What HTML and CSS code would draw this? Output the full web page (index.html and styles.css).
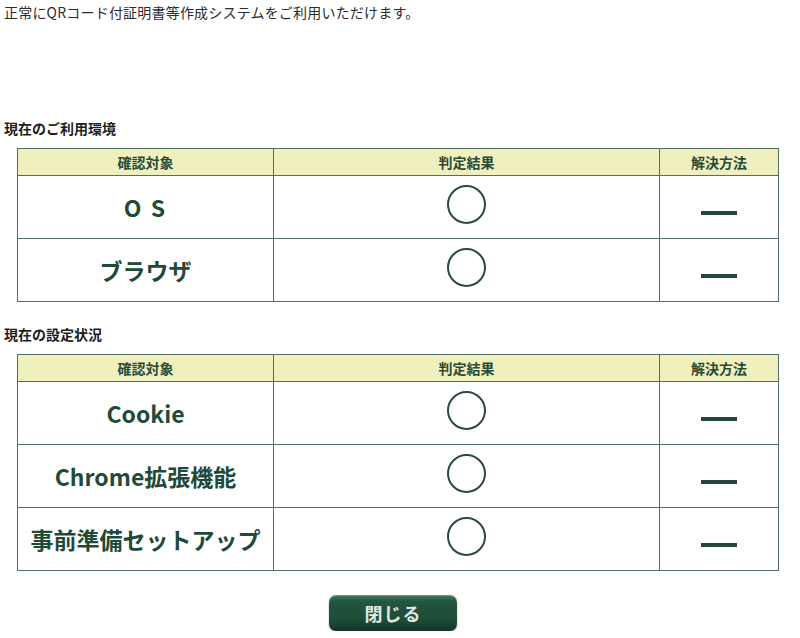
FILE: index.html
```
<!DOCTYPE html>
<html lang="ja">

<head>
    <meta charset="UTF-8">
    <meta name="viewport" content="width=device-width, initial-scale=1.0">
    <title>利用環境チェック</title>
    <link rel="stylesheet" href="styles.css">
</head>

<body>
    <p class="notice">正常にQRコード付証明書等作成システムをご利用いただけます。</p>

    <h2 class="section-title first">現在のご利用環境</h2>
    <table class="check-table">
        <thead>
            <tr>
                <th class="col-target">確認対象</th>
                <th class="col-result">判定結果</th>
                <th class="col-fix">解決方法</th>
            </tr>
        </thead>
        <tbody>
            <tr>
                <td class="target os">O S</td>
                <td><span class="ok-mark"></span></td>
                <td><span class="dash"></span></td>
            </tr>
            <tr>
                <td class="target">ブラウザ</td>
                <td><span class="ok-mark"></span></td>
                <td><span class="dash"></span></td>
            </tr>
        </tbody>
    </table>

    <h2 class="section-title">現在の設定状況</h2>
    <table class="check-table">
        <thead>
            <tr>
                <th class="col-target">確認対象</th>
                <th class="col-result">判定結果</th>
                <th class="col-fix">解決方法</th>
            </tr>
        </thead>
        <tbody>
            <tr>
                <td class="target">Cookie</td>
                <td><span class="ok-mark"></span></td>
                <td><span class="dash"></span></td>
            </tr>
            <tr>
                <td class="target">Chrome拡張機能</td>
                <td><span class="ok-mark"></span></td>
                <td><span class="dash"></span></td>
            </tr>
            <tr>
                <td class="target">事前準備セットアップ</td>
                <td><span class="ok-mark"></span></td>
                <td><span class="dash"></span></td>
            </tr>
        </tbody>
    </table>

    <div class="actions">
        <button class="close-btn" type="button">閉じる</button>
    </div>
</body>

</html>
```

FILE: styles.css
```
body {
    font-family: 'Noto Sans CJK JP', 'Noto Sans', sans-serif;
    background-color: #ffffff;
    color: #333;
    margin: 0;
    padding: 2px 4px 0;
}

.notice {
    margin: 0;
    font-size: 14px;
    line-height: 20px;
    letter-spacing: 0.2px;
    color: #2b2b2b;
}

.section-title {
    margin: 22px 0 0;
    font-size: 14px;
    line-height: 20px;
    font-weight: bold;
    color: #1e1e1e;
}

.section-title.first {
    margin-top: 96px;
}

.check-table {
    width: 762px;
    margin: 10px 0 0 13px;
    border-collapse: collapse;
    table-layout: fixed;
}

.check-table th,
.check-table td {
    border: 1px solid #52705f;
    text-align: center;
    padding: 0;
}

.check-table th {
    height: 26px;
    background-color: #eff0bd;
    color: #2a4a36;
    font-size: 14px;
    font-weight: bold;
}

.check-table td {
    height: 62px;
    vertical-align: middle;
}

.col-target {
    width: 255px;
}

.col-fix {
    width: 118px;
}

.target {
    font-size: 23px;
    font-weight: bold;
    color: #1f4a37;
    padding-bottom: 3px;
}

.target.os {
    letter-spacing: 2px;
}

.ok-mark {
    display: inline-block;
    width: 35px;
    height: 35px;
    border: 2px solid #2b4a3d;
    border-radius: 50%;
    margin-bottom: 5px;
    vertical-align: middle;
}

.dash {
    display: inline-block;
    width: 36px;
    height: 4px;
    background-color: #22483a;
    margin-top: 7px;
    vertical-align: middle;
}

.actions {
    display: flex;
    justify-content: center;
    padding: 24px 14px 0 0;
}

.close-btn {
    width: 128px;
    height: 36px;
    border: none;
    border-radius: 7px;
    background: linear-gradient(#4a7a63 0%, #24553f 18%, #1d4c37 70%, #113425 100%);
    box-shadow: inset 0 1px 1px rgba(255, 255, 255, 0.25), 0 1px 2px rgba(0, 0, 0, 0.35);
    color: #e2e7e2;
    font-family: 'Noto Sans CJK JP', sans-serif;
    font-size: 18px;
    font-weight: bold;
    letter-spacing: 1px;
    cursor: pointer;
}
```
